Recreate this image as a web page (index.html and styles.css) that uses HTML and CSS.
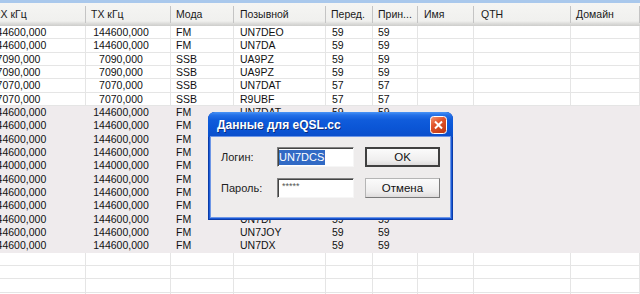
FILE: index.html
```html
<!DOCTYPE html>
<html lang="ru">
<head>
    <meta charset="UTF-8">
    <title>Журнал QSO</title>
    <link rel="stylesheet" href="styles.css">
</head>
<body>
    <div class="topbar"></div>
    <div class="log">
        <div class="head">
            <span class="c0"><b>RX кГц</b></span>
            <span>TX кГц</span>
            <span>Мода</span>
            <span class="c3">Позывной</span>
            <span>Перед.</span>
            <span>Прин...</span>
            <span class="c6">Имя</span>
            <span class="c7">QTH</span>
            <span>Домайн</span>
        </div>
        <div class="row"><span class="c0">144600,000</span><span class="c1">144600,000</span><span>FM</span><span class="c3">UN7DEO</span><span class="c4">59</span><span>59</span><span></span><span></span><span></span></div>
        <div class="row"><span class="c0">144600,000</span><span class="c1">144600,000</span><span>FM</span><span class="c3">UN7DA</span><span class="c4">59</span><span>59</span><span></span><span></span><span></span></div>
        <div class="row"><span class="c0">7090,000</span><span class="c1">7090,000</span><span>SSB</span><span class="c3">UA9PZ</span><span class="c4">59</span><span>59</span><span></span><span></span><span></span></div>
        <div class="row"><span class="c0">7090,000</span><span class="c1">7090,000</span><span>SSB</span><span class="c3">UA9PZ</span><span class="c4">59</span><span>59</span><span></span><span></span><span></span></div>
        <div class="row"><span class="c0">7070,000</span><span class="c1">7070,000</span><span>SSB</span><span class="c3">UN7DAT</span><span class="c4">57</span><span>57</span><span></span><span></span><span></span></div>
        <div class="row"><span class="c0">7070,000</span><span class="c1">7070,000</span><span>SSB</span><span class="c3">R9UBF</span><span class="c4">57</span><span>57</span><span></span><span></span><span></span></div>
        <div class="row sel"><span class="c0">144600,000</span><span class="c1">144600,000</span><span>FM</span><span class="c3">UN7DAT</span><span class="c4">59</span><span>59</span><span></span><span></span><span></span></div>
        <div class="row sel"><span class="c0">144600,000</span><span class="c1">144600,000</span><span>FM</span><span class="c3">UN7DA</span><span class="c4">59</span><span>59</span><span></span><span></span><span></span></div>
        <div class="row sel"><span class="c0">144600,000</span><span class="c1">144600,000</span><span>FM</span><span class="c3">UN7DEO</span><span class="c4">59</span><span>59</span><span></span><span></span><span></span></div>
        <div class="row sel"><span class="c0">144600,000</span><span class="c1">144600,000</span><span>FM</span><span class="c3">UN7DCS</span><span class="c4">59</span><span>59</span><span></span><span></span><span></span></div>
        <div class="row sel"><span class="c0">144000,000</span><span class="c1">144000,000</span><span>FM</span><span class="c3">UN7DAT</span><span class="c4">59</span><span>59</span><span></span><span></span><span></span></div>
        <div class="row sel"><span class="c0">144600,000</span><span class="c1">144600,000</span><span>FM</span><span class="c3">UN7DA</span><span class="c4">59</span><span>59</span><span></span><span></span><span></span></div>
        <div class="row sel"><span class="c0">144600,000</span><span class="c1">144600,000</span><span>FM</span><span class="c3">UN7DEO</span><span class="c4">59</span><span>59</span><span></span><span></span><span></span></div>
        <div class="row sel"><span class="c0">144600,000</span><span class="c1">144600,000</span><span>FM</span><span class="c3">UN7JOY</span><span class="c4">59</span><span>59</span><span></span><span></span><span></span></div>
        <div class="row sel"><span class="c0">144600,000</span><span class="c1">144600,000</span><span>FM</span><span class="c3">UN7DF</span><span class="c4">59</span><span>59</span><span></span><span></span><span></span></div>
        <div class="row sel"><span class="c0">144600,000</span><span class="c1">144600,000</span><span>FM</span><span class="c3">UN7JOY</span><span class="c4">59</span><span>59</span><span></span><span></span><span></span></div>
        <div class="row sel"><span class="c0">144600,000</span><span class="c1">144600,000</span><span>FM</span><span class="c3">UN7DX</span><span class="c4">59</span><span>59</span><span></span><span></span><span></span></div>
        <div class="row"><span></span><span></span><span></span><span></span><span></span><span></span><span></span><span></span><span></span></div>
        <div class="row"><span></span><span></span><span></span><span></span><span></span><span></span><span></span><span></span><span></span></div>
        <div class="row"><span></span><span></span><span></span><span></span><span></span><span></span><span></span><span></span><span></span></div>
        <div class="row"><span></span><span></span><span></span><span></span><span></span><span></span><span></span><span></span><span></span></div>
    </div>

    <div class="dialog">
        <div class="dlg-title">
            Данные для eQSL.cc
            <svg class="close" width="17" height="18" viewBox="0 0 17 18">
                <defs>
                    <linearGradient id="cg" x1="0" y1="0" x2="0.6" y2="1">
                        <stop offset="0" stop-color="#f59a78"/>
                        <stop offset="0.45" stop-color="#e2552c"/>
                        <stop offset="1" stop-color="#c43c16"/>
                    </linearGradient>
                </defs>
                <rect x="0.5" y="0.5" width="16" height="17" rx="3" fill="url(#cg)" stroke="#fff"/>
                <path d="M5 5.5l7 7M12 5.5l-7 7" stroke="#fff" stroke-width="2"/>
            </svg>
        </div>
        <div class="dlg-body">
            <div class="fields">
                <label>Логин:</label>
                <div class="field"><span class="picked">UN7DCS</span></div>
                <label>Пароль:</label>
                <div class="field pass">*****</div>
            </div>
            <div class="buttons">
                <button class="btn default">OK</button>
                <button class="btn">Отмена</button>
            </div>
        </div>
    </div>
</body>
</html>
```

FILE: styles.css
```css
* {
    box-sizing: border-box;
}
body {
    margin: 0;
    height: 294px;
    overflow: hidden;
    position: relative;
    background: #fff;
    color: #111;
    font-family: 'Liberation Sans', Arial, sans-serif;
    font-size: 10.5px;
}
.topbar {
    height: 3px;
    background: #a9c8ec;
}
.head,
.row {
    display: grid;
    grid-template-columns: 86px 85px 63px 92px 47px 45px 56px 97px 1fr;
}
.head {
    height: 23px;
    background: linear-gradient(#f5f5f3 0, #f0f0ee 78%, #dfdfdd 88%, #cdcdcb 100%);
}
.head span {
    display: flex;
    align-items: center;
    padding: 0 0 2px 5px;
    white-space: nowrap;
    overflow: hidden;
    color: #1a1a1a;
    background: linear-gradient(#c4c4c4, #c4c4c4) right 3px / 1px 17px no-repeat;
}
.head .c0 b {
    font-weight: normal;
    margin-left: -12px;
}
.head .c3, .head .c6 { padding-left: 6px; }
.head .c7 { padding-left: 7px; }

.row {
    height: 13.333px;
    border-bottom: 1px solid #e5e5e5;
}
.row span {
    display: flex;
    align-items: center;
    padding-left: 5px;
    white-space: nowrap;
    border-right: 1px solid #e5e5e5;
}
.row .c0 {
    justify-content: center;
    padding: 0 48px 0 0;
}
.row .c1 {
    justify-content: center;
    padding: 0 14px 0 0;
}
.row .c3, .row .c4 { padding-left: 6px; }
.row.sel {
    background: #efebed;
    border-bottom-color: #efebed;
}
.row.sel span { border-right-color: #efebed; }

/* modal */
.dialog {
    position: absolute;
    left: 208px;
    top: 112px;
    width: 245px;
    height: 108px;
    background: #1c5ad6;
    border-radius: 7px 7px 0 0;
    box-shadow: inset 0 0 0 1px #0b3ba8;
}
.dlg-title {
    height: 25px;
    display: flex;
    align-items: center;
    padding: 0 6px 0 9px;
    border-radius: 7px 7px 0 0;
    background: linear-gradient(#4a95f7 0, #2571e8 3px, #105cdb 8px, #0b56d6 60%, #0a4ecb 100%);
    color: #fff;
    font-size: 12px;
    font-weight: bold;
    text-shadow: 1px 1px 0 #0b2d7c;
}
.close {
    margin-left: auto;
}
.dlg-body {
    margin: 0 3px 3px;
    height: 80px;
    display: flex;
    gap: 11px;
    padding: 10px 10px 0;
    background: #eeecec;
    box-shadow: 0 0 0 1px #6d96e6;
    font-size: 11px;
}
.fields {
    display: grid;
    grid-template-columns: 56px 77px;
    grid-auto-rows: 20px;
    row-gap: 11px;
    align-items: center;
}
.fields label {
    color: #222;
}
.field {
    height: 20px;
    display: flex;
    align-items: center;
    padding-left: 1px;
    background: #fff;
    border: 1px solid;
    border-color: #828282 #f6f6f6 #f6f6f6 #828282;
    box-shadow: inset 1px 1px 0 #444;
}
.picked {
    background: #316ac5;
    color: #fff;
    line-height: 15px;
    padding-right: 1px;
}
.pass {
    align-items: flex-start;
    padding: 2px 0 0 4px;
    font-size: 9px;
    color: #555;
}
.buttons {
    display: flex;
    flex-direction: column;
    gap: 11px;
}
.btn {
    width: 75px;
    height: 20px;
    padding: 0;
    font-family: inherit;
    font-size: 11.5px;
    color: #111;
    background: linear-gradient(#fbfbfb, #efeeee 70%, #dedcdc);
    border: 1px solid;
    border-color: #b5b5b5 #7b7b7b #7b7b7b #b5b5b5;
}
.btn.default {
    border: 2px solid #404040;
}
```
